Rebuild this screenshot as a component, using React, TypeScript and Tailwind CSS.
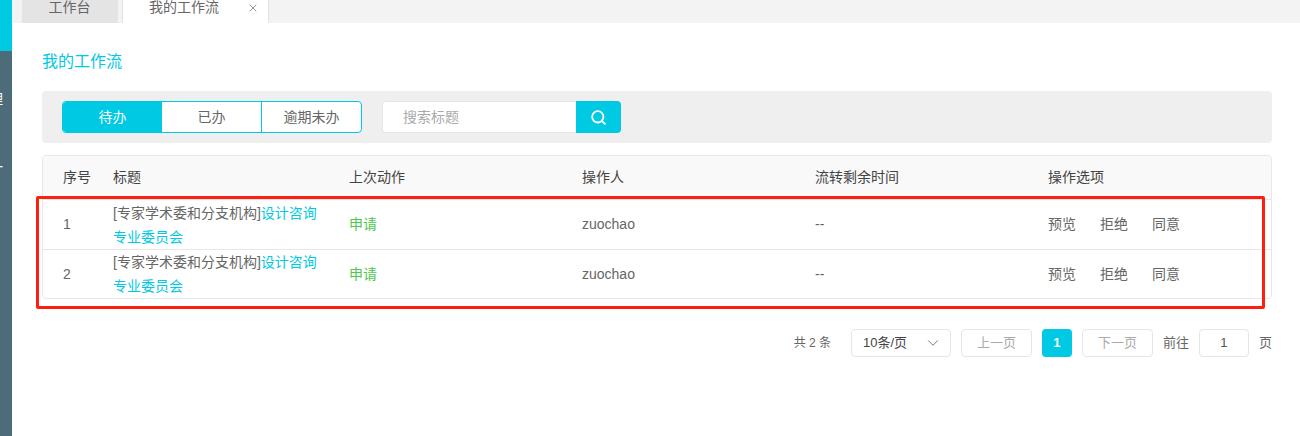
import { Search, ChevronDown, X } from "lucide-react";

const FONT = "font-['Liberation_Sans','Noto_Sans_CJK_SC',sans-serif]";

const rows = [
  { id: 1, h: "h-[50px]" },
  { id: 2, h: "h-[49px] pb-[1px]" },
];

const COLS = "grid grid-cols-[50px_236px_233px_233px_233px_1fr]";

export default function App() {
  return (
    <div className={`relative flex h-[436px] w-[1300px] overflow-hidden bg-white text-[14px] text-[#666] ${FONT}`}>
      {/* Sidebar */}
      <div className="flex w-3 shrink-0 flex-col overflow-hidden bg-[#4d6c79] text-white">
        <div className="h-[51px] shrink-0 bg-[#00c9e4]" />
        <div className="mt-[40px] -ml-[11px] w-[14px] text-[14px] leading-4">理</div>
        <div className="mt-[52px] -ml-[11px] w-[14px] text-[14px] leading-4">一</div>
      </div>

      <div className="flex min-w-0 flex-1 flex-col">
        {/* Tabs */}
        <div className="flex h-[23px] items-stretch gap-1 bg-[#f3f3f3] pl-[10px]">
          <div className="flex w-[96px] items-center justify-center bg-[#e4e4e4] pb-[9px] pr-[1px]">工作台</div>
          <div className="flex w-[147px] items-center border-x border-[#e2e2e2] bg-white pb-[9px] pl-[26px]">
            我的工作流
            <X size={12} strokeWidth={1.6} className="ml-[28px] mt-[2px] text-[#777]" />
          </div>
        </div>

        <div className="pl-[30px] pr-[28px]">
          <div className="mt-[28px] h-[22px] text-[16px] leading-[22px] text-[#00c9e4]">我的工作流</div>

          {/* Toolbar */}
          <div className="mt-[18px] flex h-[52px] items-center gap-5 rounded bg-[#efefef] px-5">
            <div className="flex h-8 w-[300px] overflow-hidden rounded border border-[#00c9e4] bg-white">
              <div className="flex flex-1 items-center justify-center bg-[#00c9e4] text-white">待办</div>
              <div className="flex flex-1 items-center justify-center border-r border-[#00c9e4]">已办</div>
              <div className="flex flex-1 items-center justify-center">逾期未办</div>
            </div>
            <div className="flex h-8">
              <div className="flex w-[194px] items-center rounded-l border border-r-0 border-[#e6e6e6] bg-white pl-5 text-[#aaa]">
                搜索标题
              </div>
              <div className="flex w-[45px] items-center justify-center rounded-r bg-[#00c9e4] text-white">
                <Search size={17} strokeWidth={2.6} />
              </div>
            </div>
          </div>

          {/* Table */}
          <div className="mt-3 overflow-hidden rounded border border-[#e8e8e8]">
            <div className={`${COLS} h-[43px] items-center bg-[#f9f9f9] pl-5 text-[#444]`}>
              <div>序号</div>
              <div>标题</div>
              <div>上次动作</div>
              <div>操作人</div>
              <div>流转剩余时间</div>
              <div>操作选项</div>
            </div>
            {rows.map((row) => (
              <div key={row.id} className={`${COLS} ${row.h} items-center border-t border-[#e8e8e8] pl-5`}>
                <div>{row.id}</div>
                <div className="w-[212px] leading-[24px]">
                  [专家学术委和分支机构]<span className="text-[#00c9e4]">设计咨询专业委员会</span>
                </div>
                <div className="text-[#4cc94c]">申请</div>
                <div>zuochao</div>
                <div>--</div>
                <div className="flex gap-6">
                  <span>预览</span>
                  <span>拒绝</span>
                  <span>同意</span>
                </div>
              </div>
            ))}
          </div>

          {/* Pagination */}
          <div className="mt-[30px] flex h-7 items-center justify-end text-[13px]">
            <span className="mr-5 text-[12px]">共 2 条</span>
            <div className="mr-[10px] flex h-7 w-[100px] items-center justify-between rounded-sm border border-[#e6e6e6] pl-[11px] pr-[8px] text-[#444]">
              10条/页
              <ChevronDown size={18} strokeWidth={1.2} className="text-[#666]" />
            </div>
            <div className="flex h-7 w-[71px] items-center justify-center rounded-sm border border-[#e6e6e6] text-[#aaa]">上一页</div>
            <div className="ml-[10px] flex h-[28px] w-[30px] items-center justify-center rounded-sm bg-[#00c9e4] font-bold text-white">1</div>
            <div className="ml-[10px] flex h-7 w-[71px] items-center justify-center rounded-sm border border-[#e6e6e6] text-[#aaa]">下一页</div>
            <span className="ml-[10px]">前往</span>
            <div className="ml-[10px] flex h-7 w-[50px] items-center justify-center rounded-sm border border-[#e6e6e6] text-[#555]">1</div>
            <span className="ml-[10px]">页</span>
          </div>
        </div>
      </div>

      {/* Red annotation box */}
      <div className="absolute left-[36px] top-[196px] h-[113px] w-[1229px] rounded-[2px] border-[3px] border-[#ff1f10]" />
    </div>
  );
}
